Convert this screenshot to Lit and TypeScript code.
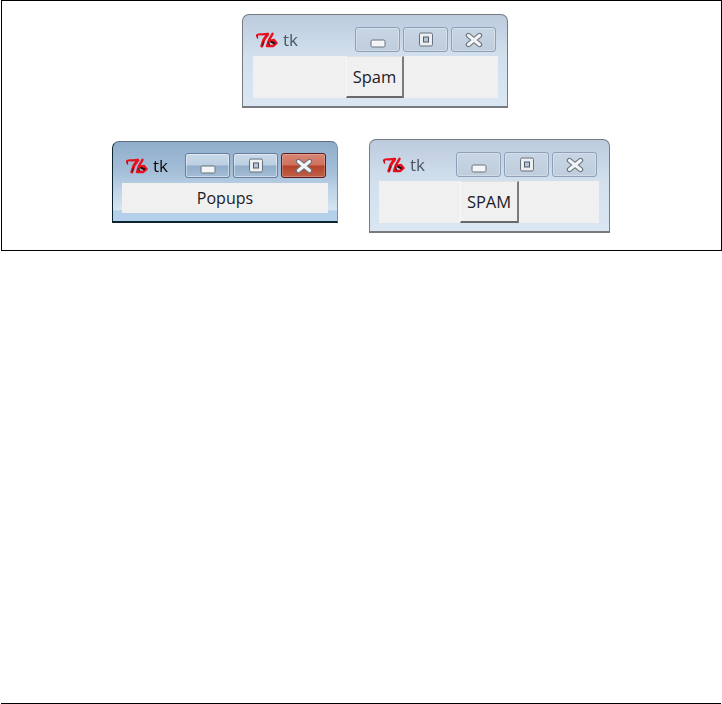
import { LitElement, html, css, svg } from "lit";
import { customElement, property } from "lit/decorators.js";

const tkLogo = svg`<svg class="logo" width="22" height="16" viewBox="0 0 22 16">
  <g fill="none" stroke-linecap="round" stroke-linejoin="round">
    <path d="M0.8 3.8 C1.5 1.4 4 2.4 6.5 2.4 L12 1.8" stroke="#e8101c" stroke-width="2.2"/>
    <path d="M1 3.5 L1.6 6" stroke="#c8101c" stroke-width="1.4"/>
    <path d="M11.6 2.4 L8 7.5 L5.8 14" stroke="#e8101c" stroke-width="3"/>
    <path d="M7.6 9.5 L6.4 13.4" stroke="#50101a" stroke-width="1"/>
    <path d="M16.5 1.8 L13 8 L11 14 L17 14 L20.5 11 L18 8 L14 9" stroke="#e8101c" stroke-width="2.4"/>
    <path d="M15.5 10 L18 11" stroke="#28080c" stroke-width="2.4"/>
    <path d="M12.6 10.5 L13.6 13" stroke="#38101a" stroke-width="1.1"/>
  </g>
</svg>`;

const minGlyph = svg`<svg width="16" height="9" viewBox="0 0 16 9"><rect x="1" y="1" width="14" height="7" rx="1.5" fill="#f4f5f6" stroke="#66727e" stroke-width="1"/></svg>`;
const maxGlyph = svg`<svg width="16" height="15" viewBox="0 0 16 15"><rect x="1.5" y="1" width="13" height="13" rx="1.5" fill="#eceef0" stroke="#66717d"/><rect x="5.5" y="5" width="5" height="5" fill="#b4c5d8" stroke="#4f5c6a"/></svg>`;
const closeGlyph = svg`<svg width="18" height="16" viewBox="0 0 18 16" stroke-linecap="round"><path d="M3.5 3.5 L14.5 12.5 M14.5 3.5 L3.5 12.5" stroke="#68727c" stroke-width="5.4"/><path d="M3.5 3.5 L14.5 12.5 M14.5 3.5 L3.5 12.5" stroke="#f2f4f6" stroke-width="3.2"/></svg>`;

@customElement("tk-window")
class TkWindow extends LitElement {
  @property({ type: Boolean }) active = false;
  @property() label = "";
  @property() kind = "button";

  static styles = css`
    :host { display: block; height: 100%; }
    .win {
      box-sizing: border-box;
      height: 100%;
      display: flex;
      flex-direction: column;
      border: 1px solid #777b80;
      border-bottom-width: 2px;
      border-radius: 7px 7px 0 0;
      background: linear-gradient(180deg, #bccbdd 0%, #d2e0ee 45%, #dae6f2 100%);
      padding: 0 var(--pad-right, 9px) 8px var(--pad-left, 9px);
      filter: blur(0.3px);
    }
    .win.active {
      border-color: #5c7080 #6f93ad #0c2430 #0c2430;
      background: linear-gradient(180deg, #8fadcb 0%, #a5bfd9 38%, #bdd3e7 60%, #d6e5f2 86%, #b5d0ea 87%, #b5d0ea 100%);
    }
    .title {
      flex: none;
      display: flex;
      align-items: flex-start;
      justify-content: space-between;
      height: 41px;
      padding-top: 12px;
      box-sizing: border-box;
    }
    .active .title { padding-top: 11px; }
    .cap {
      display: flex;
      align-items: center;
      gap: 5px;
      margin-left: var(--cap-left, 4px);
      height: 25px;
      font: 17px "Open Sans", sans-serif;
      color: #4b5763;
    }
    .active .cap { color: #0c0c0c; }
    .logo { display: block; }
    .btns { display: flex; gap: 3px; margin-right: 2px; }
    .tb {
      box-sizing: border-box;
      width: 45px;
      height: 25px;
      display: flex;
      align-items: center;
      justify-content: center;
      border: 1px solid #8ea1b8;
      border-radius: 3px;
      background: linear-gradient(180deg, #c8d5e4, #bfcddd);
      box-shadow: inset 0 0 0 1px rgba(255, 255, 255, 0.28);
    }
    .active .tb {
      border-color: #64809d;
      background: linear-gradient(180deg, #c9d9e9 0%, #bccfe2 48%, #91adc9 52%, #a5bdd6 100%);
      box-shadow: inset 0 0 0 1px rgba(255, 255, 255, 0.45);
    }
    .active .tb.close {
      border-color: #5c1c1c;
      background: linear-gradient(180deg, #d98674 0%, #d0705e 48%, #b5412a 52%, #c0604a 100%);
      box-shadow: inset 0 0 0 1px rgba(255, 255, 255, 0.22);
    }
    .glyph-min { padding-top: 7px; display: flex; }
    .tb svg { display: block; }
    .body {
      flex: 1;
      min-height: 0;
      background: #f0f0f0;
      display: flex;
      align-items: stretch;
      justify-content: center;
    }
    .push {
      box-sizing: border-box;
      margin: 0 var(--push-mr, 0) 0 var(--push-ml, 0);
      height: 100%;
      width: var(--push-w, 58px);
      font: 16.5px "Open Sans", sans-serif;
      color: #1c2026;
      background: #f0f0f0;
      border-style: solid;
      border-width: 1px 2px 2px 1px;
      border-color: #e2e2e2 #7c7c7c #6a6a6a #f8f8f8;
      display: flex;
      align-items: center;
      justify-content: center;
    }
    .plain {
      display: flex;
      align-items: center;
      font: 16px "Open Sans", sans-serif;
      color: #1c2026;
    }
  `;

  render() {
    return html`<div class="win ${this.active ? "active" : ""}">
      <div class="title">
        <div class="cap">${tkLogo}<span>tk</span></div>
        <div class="btns">
          <div class="tb"><span class="glyph-min">${minGlyph}</span></div>
          <div class="tb">${maxGlyph}</div>
          <div class="tb close">${closeGlyph}</div>
        </div>
      </div>
      <div class="body">
        ${this.kind === "label"
          ? html`<div class="plain">${this.label}</div>`
          : html`<div class="push">${this.label}</div>`}
      </div>
    </div>`;
  }
}

@customElement("app-root")
export class AppRoot extends LitElement {
  static styles = css`
    :host { display: flex; flex-direction: column; height: 704px; width: 722px; background: #fff; }
    .figure {
      position: relative;
      box-sizing: border-box;
      flex: none;
      height: 251px;
      margin-left: 1px;
      border: 1px solid #000;
    }
    .slot { position: absolute; }
    .w1 { left: 240px; top: 13px; width: 266px; height: 94px; --pad-left: 10px; --cap-left: 3px; --push-mr: 1px; }
    .w2 { left: 110px; top: 140px; width: 226px; height: 82px; }
    .w3 { left: 367px; top: 138px; width: 241px; height: 94px; --pad-right: 10px; --push-w: 59px; --push-ml: 1px; }
    .rule { margin-top: auto; height: 1px; margin-left: 1px; margin-right: 1px; background: #000; }
  `;

  render() {
    return html`
      <div class="figure">
        <div class="slot w1"><tk-window label="Spam"></tk-window></div>
        <div class="slot w2"><tk-window active kind="label" label="Popups"></tk-window></div>
        <div class="slot w3"><tk-window label="SPAM"></tk-window></div>
      </div>
      <div class="rule"></div>
    `;
  }
}
